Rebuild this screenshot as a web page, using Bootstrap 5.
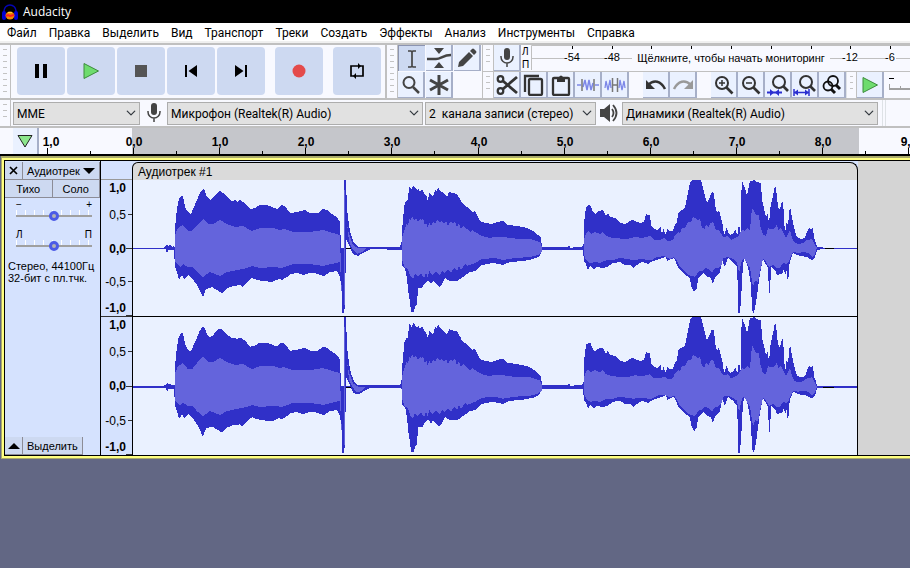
<!DOCTYPE html>
<html lang="ru">
<head>
<meta charset="utf-8">
<meta name="viewport" content="width=device-width, initial-scale=1">
<title>Audacity</title>
<link href="https://cdn.jsdelivr.net/npm/bootstrap@5.3.0/dist/css/bootstrap.min.css" rel="stylesheet">
<style>
body{background:#626784;color:#000;font:12px/16px "Open Sans","Noto Sans",sans-serif;overflow:hidden}
svg{display:block;flex-shrink:0}
svg text{font-family:"Liberation Sans",Arial,sans-serif}
button{padding:0;border:0;color:#000}
.titlebar{background:#000;color:#fff;height:23px;padding-left:2px;gap:5px}
.menubar{height:20px;background:#fff;border-bottom:2px solid #f0f0f0;padding-left:7px;gap:12px;font-family:Roboto,"Open Sans",sans-serif}
.menubar a{color:#000;text-decoration:none;white-space:nowrap;line-height:20px}
.dock{background:#f8f9ff;border-top:2px solid #c0c0c0}
.grip{flex:none;width:11px;border-right:1px solid #c0c0c0;padding:4px 3px;background:repeating-linear-gradient(#c3c3c3 0 1px,transparent 1px 6px) content-box}
.transport{gap:2px;padding:2px 4px 3px 6px;border-right:2px solid #c0c0c0}
.tbtn{width:48px;height:48px;border-radius:4px;background:#cdd9f1;display:grid;place-items:center}
.gap-left{margin-left:8px}
.tool{width:27px;height:26px;background:#eaf1ff;border-right:2px solid #a6afc8;border-bottom:1px solid #a6afc8;display:grid;place-items:center;flex:none}
.tool.pressed{background:#cdd9f1;border:1px solid #8c94b0;border-width:1px 0 0 1px}
.tools-grid{display:grid;grid-template-columns:repeat(3,27px);gap:1px;padding-right:1px;border-right:1px solid #c0c0c0}
.toolrow{height:26px}
.toolrow + .toolrow{border-top:1px solid #c0c0c0;height:27px}
.space{margin-left:14px}
.lr{font:10px/13px "Liberation Sans",Arial,sans-serif;width:10px;padding-left:1px}
.devices{background:#f8f9ff;border-top:2px solid #c0c0c0;border-bottom:2px solid #c0c0c0;height:30px}
.form-select.device{height:23px;border:1px solid #adadad;border-radius:0;background-color:#e1e1e1;background-size:10px;background-position:right 3px center;padding:1px 16px 0 3px;font:12px/20px Roboto,"Open Sans",sans-serif;color:#000;flex:none}
.w-host{width:127px}.w-dev{width:256px}.w-chan{width:171px}
.timeline{height:28px;background:#f8f9ff;border-bottom:2px solid #000;overflow:hidden}
.pin{width:26px;height:26px;background:#eaf1ff;border-right:2px solid #a6afc8;margin-left:13px;display:grid;place-items:center;flex:none}
.track-frame{margin-left:1px;border:solid #a9a96c;border-width:2px 0 1px 1px;font-family:"Liberation Sans",Arial,sans-serif}
.track-inner{border:solid #ffff80;border-width:2px 0 2px 2px;background:#000;padding-bottom:1px}
.track-box{border-top:1px solid #000;border-left:1px solid #000;background:#d4d4d4;height:295px;overflow:hidden}
.panel{width:96px;background:#d5e2fe;border-right:1px solid #000;padding-top:1px;flex:none}
.panel button{background:#cdd9f1;border:solid #8c8c96;border-width:0 1px 1px 0;font-size:12px;line-height:18px;height:18px}
.panel .short{font-size:11px}
.pan{padding:0 8px 0 11px;font-size:10px;line-height:10px;margin-top:9px}
.pan-first{margin-top:2px}
.pan input{display:block;appearance:none;width:100%;height:11px;margin:0;background:linear-gradient(#a0a0a0,#a0a0a0) 0 5px/100% 2px no-repeat,repeating-linear-gradient(90deg,#fff 0 1px,transparent 1px 9px) 0 0/100% 6px no-repeat}
.pan input::-webkit-slider-thumb{appearance:none;width:10px;height:10px;border:3px solid #4c5ae6;border-radius:50%;background:#b4b4b4}
.info{font-size:11px;line-height:12px;padding:1px 3px;white-space:nowrap}
.scale{width:31px;background:#d5e2fe;flex:none}
.scale-head{height:19px;border-bottom:1px solid #999}
.clip{flex:none;background:#d5e2fe}
.clip-name{height:18px;background:#dadada;border:1px solid #000;border-bottom:0;border-radius:6px 8px 0 0;font-size:12px;line-height:18px;padding-left:5px;margin-top:1px;width:726px}
.lane{background:#eaf1ff;border:solid #000;border-width:0 1px;width:726px}
.lane svg + svg{border-top:1px solid #000}
</style>
<script src="https://cdn.jsdelivr.net/npm/bootstrap@5.3.0/dist/js/bootstrap.bundle.min.js"></script>
</head>
<body>
<header class="titlebar d-flex align-items-center">
<svg width="16" height="18" viewBox="0 0 16 18"><path d="M2 11V8a6 6 0 0 1 12 0v3" fill="none" stroke="#0505b4" stroke-width="1.5"/><rect y="8" width="4" height="9" rx="2" fill="#0000d6"/><rect x="12" y="8" width="4" height="9" rx="2" fill="#0000d6"/><ellipse cx="8" cy="12.500" rx="4.500" ry="4" fill="#f08a00"/><path d="M4 13l2-1 2 1 4-1" stroke="#f22" stroke-width="2" fill="none"/><path d="M6 9.500h4" stroke="#ffc83c"/></svg>
<span>Audacity</span>
</header>
<nav class="menubar d-flex" aria-label="Меню"><a href="#">Файл</a><a href="#">Правка</a><a href="#">Выделить</a><a href="#">Вид</a><a href="#">Транспорт</a><a href="#">Треки</a><a href="#">Создать</a><a href="#">Эффекты</a><a href="#">Анализ</a><a href="#">Инструменты</a><a href="#">Справка</a></nav>

<div class="dock d-flex">
<div class="grip"></div>
<div class="transport d-flex">
<button class="tbtn" aria-label="Пауза"><svg width="16" height="16"><path d="M2 1h4v14H2zM10 1h4v14h-4z"/></svg></button>
<button class="tbtn" aria-label="Играть"><svg width="18" height="18"><path d="M2 1.500L16.500 9 2 16.500z" fill="#6edc6e" stroke="#3c8c3c"/></svg></button>
<button class="tbtn" aria-label="Стоп"><svg width="12" height="12"><path d="M0 0h12v12H0z" fill="#555"/></svg></button>
<button class="tbtn" aria-label="К началу"><svg width="14" height="14"><path d="M1 1h2v12H1zM13 1v12L4.500 7z"/></svg></button>
<button class="tbtn" aria-label="К концу"><svg width="14" height="14"><path d="M11 1h2v12h-2zM1 1v12l8.500-6z"/></svg></button>
<button class="tbtn gap-left" aria-label="Запись"><svg width="14" height="14"><circle cx="7" cy="7" r="6.500" fill="#e44b4b"/></svg></button>
<button class="tbtn gap-left" aria-label="Цикл"><svg width="16" height="16" fill="none" stroke="#000" stroke-width="1.700"><path d="M5 13H2V3h8M11 3h3v10H6"/><path d="M9 0v6l3-3zM7 10v6l-3-3z" fill="#000" stroke="none"/></svg></button>
</div>
<div class="grip"></div>
<div class="tools-grid">
<button class="tool pressed" aria-label="Выделение"><svg width="14" height="20" fill="none" stroke="#444" stroke-width="1.700"><path d="M3 2h3l1 1 1-1h3M3 18h3l1-1 1 1h3M7 3v14"/></svg></button>
<button class="tool" aria-label="Огибающая"><svg width="24" height="22" fill="#444"><path d="M7 1h10l-5 6zM7 21h10l-5-6z"/><path d="M0 12h9c5 0 7-4 15-4" fill="none" stroke="#444" stroke-width="2.500"/></svg></button>
<button class="tool" aria-label="Рисование"><svg width="20" height="20" fill="#444"><path d="M1 19l1-5L12 4l4 4L6 18zM13 3l2-2q1-1 2 0l2 2q1 1 0 2l-2 2z"/></svg></button>
<button class="tool" aria-label="Масштаб"><svg width="20" height="20" fill="none" stroke="#444"><circle cx="8" cy="7.500" r="5.500" stroke-width="2"/><path d="M12 12l6 6" stroke-width="2.500"/></svg></button>
<button class="tool" aria-label="Мультиинструмент"><svg width="22" height="22" stroke="#444" stroke-width="3"><path d="M11 1v20M2 6l18 10M20 6L2 16"/></svg></button>
</div>
<div class="flex-grow-1 overflow-hidden">
<div class="toolrow d-flex">
<div class="grip"></div>
<button class="tool" aria-label="Уровень записи"><svg width="16" height="22" fill="none" stroke="#444" stroke-width="1.500"><rect x="5" y="1" width="6" height="12" rx="3" fill="#444" stroke="none"/><path d="M2 9v1a6 6 0 0 0 12 0V9M8 16v4"/></svg></button>
<div class="lr">Л<br>П</div>
<svg class="flex-grow-1" height="26" width="379" style="min-width:0"><path d="M.5 25V.5H800M0 13.500h800" stroke="#c0c0c0" fill="none"/><path d="M41.500 1v3M81.500 1v3M120.500 1v3M160.500 1v3M200.500 1v3M240.500 1v3M280.500 1v3M319.500 1v3M359.500 1v3" stroke="#000"/><g fill="#f8f9ff"><path d="M36 8h12v10H36zM76 8h12v10H76zM101 5h198v16H101zM314 8h12v10h-12zM357 8h8v10h-8z"/></g><g font-size="11" text-anchor="middle"><text x="41" y="16">-54</text><text x="81" y="16">-48</text><text x="200" y="17">Щёлкните, чтобы начать мониторинг</text><text x="319" y="16">-12</text><text x="359" y="16">-6</text></g></svg>
</div>
<div class="toolrow d-flex">
<div class="grip"></div>
<button class="tool" aria-label="Вырезать"><svg width="22" height="22" fill="none" stroke="#333" stroke-width="2.200"><circle cx="4.500" cy="5" r="2.800"/><circle cx="4.500" cy="17" r="2.800"/><path d="M7 7l14 12M7 15L21 3" stroke-width="2.800"/></svg></button>
<button class="tool" aria-label="Копировать"><svg width="22" height="22" fill="none" stroke="#333" stroke-width="2.300"><rect x="6" y="5" width="13" height="16" rx="1.500"/><path d="M2 18V2h14"/></svg></button>
<button class="tool" aria-label="Вставить"><svg width="20" height="22" fill="none" stroke="#333" stroke-width="2.300"><rect x="2" y="4" width="16" height="17" rx="1"/><path d="M6 3h2q2-3 4 0h2v5H6z" fill="#333" stroke="none"/></svg></button>
<button class="tool" aria-label="Обрезать"><svg width="22" height="20" fill="none"><path d="M0 10h4M18 10h4" stroke="#7d88e8" stroke-width="1.500"/><path d="M6 12l2-7 2 10 2-10 2 10 2-7" stroke="#7d88e8" stroke-width="1.500"/><path d="M5 4v12M17 4v12" stroke="#777" stroke-width="1.500"/></svg></button>
<button class="tool" aria-label="Заглушить"><svg width="22" height="20" fill="none"><path d="M1 13l1-7 2 9 2-10 1 8M15 13l1-8 2 10 2-9 1 7" stroke="#7d88e8" stroke-width="1.300"/><path d="M8.500 3v14M13.500 3v14M8 10h6" stroke="#777" stroke-width="1.500"/></svg></button>
<button class="tool space" aria-label="Отменить"><svg width="22" height="18" fill="none" stroke="#333" stroke-width="2.500"><path d="M3 9c6-6 13-4 17 4"/><path d="M1 4v9h9z" fill="#333" stroke="none"/></svg></button>
<button class="tool" aria-label="Повторить"><svg width="22" height="18" fill="none" stroke="#999" stroke-width="2.500"><path d="M19 9C13 3 6 5 2 13"/><path d="M21 4v9h-9z" fill="#999" stroke="none"/></svg></button>
<button class="tool space" aria-label="Приблизить"><svg width="20" height="20" fill="none" stroke="#333" stroke-width="2"><circle cx="8" cy="8" r="6"/><path d="M12.500 12.500l6 6" stroke-width="2.700"/><path d="M5 8h6M8 5v6" stroke-width="1.500"/></svg></button>
<button class="tool" aria-label="Отдалить"><svg width="20" height="20" fill="none" stroke="#333" stroke-width="2"><circle cx="8" cy="8" r="6"/><path d="M12.500 12.500l6 6" stroke-width="2.700"/><path d="M5 8h6" stroke-width="1.500"/></svg></button>
<button class="tool" aria-label="Уместить выделение"><svg width="23" height="22" fill="none" stroke="#333" stroke-width="2"><circle cx="13" cy="8" r="6"/><path d="M17 12l5 5" stroke-width="2.700"/><path d="M1 18.500h15" stroke="#2b2fd0"/><path d="M8 18.500l-4-3.500v7zM9 18.500l4-3.500v7z" fill="#2b2fd0" stroke="none"/></svg></button>
<button class="tool" aria-label="Уместить проект"><svg width="23" height="22" fill="none" stroke="#333" stroke-width="2"><circle cx="13" cy="8" r="6"/><path d="M17 12l5 5" stroke-width="2.700"/><path d="M1 15v7M16 15v7M1 18.500h15" stroke="#2b2fd0" stroke-width="1.500"/><path d="M1 18.500l4-3v6zM16 18.500l-4-3v6z" fill="#2b2fd0" stroke="none"/></svg></button>
<button class="tool" aria-label="Переключить масштаб"><svg width="22" height="22" fill="none" stroke="#111" stroke-width="1.800"><circle cx="12" cy="7" r="5"/><circle cx="7" cy="12" r="4.500"/><path d="M15 11l4 4M10 15l4 4" stroke-width="3"/></svg></button>
<div class="grip border-start"></div>
<button class="tool" aria-label="Воспроизвести"><svg width="18" height="18"><path d="M2 1.500L16.500 9 2 16.500z" fill="#6edc6e" stroke="#3c8c3c"/></svg></button>
<svg class="flex-grow-1" width="20" height="26" style="min-width:0"><path d="M5 6.500h5" stroke="#000"/><path d="M5 17h300" stroke="#a0a0a0" stroke-width="2"/><path d="M5.500 12v5M16.500 14v3" stroke="#a0a0a0"/></svg>
</div>
</div>
</div>

<div class="devices d-flex align-items-center">
<div class="grip align-self-stretch"></div>
<select class="form-select device w-host" style="margin-left:2px" aria-label="Аудиохост"><option>MME</option></select>
<svg class="mx-1" width="19" height="22" fill="none" stroke="#444" stroke-width="1.500"><rect x="7" y="1" width="6" height="12" rx="3" fill="#444" stroke="none"/><path d="M4 9v1a6 6 0 0 0 12 0V9M10 16v4"/></svg>
<select class="form-select device w-dev" aria-label="Устройство записи"><option>Микрофон (Realtek(R) Audio)</option></select>
<select class="form-select device w-chan" style="margin-left:2px" aria-label="Каналы записи"><option>2&nbsp; канала записи (стерео)</option></select>
<svg class="mx-1" width="18" height="20" fill="none" stroke="#444" stroke-width="1.800"><path d="M0 6h4l6-5v18l-6-5H0z" fill="#444" stroke="none"/><path d="M12 6q3 4 0 8M13 2q7 8 0 16"/></svg>
<select class="form-select device w-dev" aria-label="Устройство воспроизведения"><option>Динамики (Realtek(R) Audio)</option></select>
<div class="grip-end border-start border-end align-self-stretch ms-1" style="width:4px"></div>
</div>

<div class="timeline d-flex">
<button class="pin" aria-label="Закрепить головку"><svg width="18" height="16"><path d="M2 2.500h14L9 14z" fill="#8ce68c" stroke="#222"/></svg></button>
<svg class="flex-grow-1" height="26" width="871" style="min-width:0"><path d="M93 0h727v26H93z" fill="#c5c6cb"/><path stroke="#000" d="M8.500 20v6M94.500 20v6M180.500 20v6M266.500 20v6M352.500 20v6M439.500 20v6M525.500 20v6M611.500 20v6M697.500 20v6M783.500 20v6M869.500 20v6M51.500 23v3M137.500 23v3M223.500 23v3M309.500 23v3M395.500 23v3M482.500 23v3M568.500 23v3M654.500 23v3M740.500 23v3M826.500 23v3"/><g font-size="12" font-weight="bold" text-anchor="middle"><text x="12" y="18">1,0</text><text x="95" y="18">0,0</text><text x="181" y="18">1,0</text><text x="267" y="18">2,0</text><text x="353" y="18">3,0</text><text x="440" y="18">4,0</text><text x="526" y="18">5,0</text><text x="612" y="18">6,0</text><text x="698" y="18">7,0</text><text x="784" y="18">8,0</text><text x="870" y="18">9,0</text></g></svg>
</div>

<main class="track-frame"><div class="track-inner"><div class="track-box d-flex">
<section class="panel d-flex flex-column">
<div class="d-flex"><button style="width:18px" aria-label="Закрыть"><svg class="mx-auto" width="9" height="9"><path d="M1 1l7 7M8 1L1 8" stroke="#000" stroke-width="1.700"/></svg></button><button class="short flex-grow-1 d-flex align-items-center justify-content-between ps-1 pe-1 text-nowrap">Аудиотрек<svg width="12" height="6"><path d="M0 0h12L6 6z"/></svg></button></div>
<div class="d-flex"><button class="w-50 short">Тихо</button><button class="w-50 short">Соло</button></div>
<div class="pan pan-first"><div class="d-flex justify-content-between"><span>−</span><span>+</span></div><input type="range" aria-label="Усиление" value="50"></div>
<div class="pan"><div class="d-flex justify-content-between"><span>Л</span><span>П</span></div><input type="range" aria-label="Панорама" value="50"></div>
<div class="info mt-2">Стерео, 44100Гц<br>32-бит с пл.тчк.</div>
<div class="mt-auto d-flex"><button style="width:18px" aria-label="Свернуть"><svg class="mx-auto" width="12" height="6"><path d="M0 6h12L6 0z"/></svg></button><button class="short px-1">Выделить</button></div>
</section>
<div class="scale">
<div class="scale-head"></div>
<svg width="31" height="276"><g font-size="12" text-anchor="end"><g font-weight="bold"><text x="25" y="12">1,0</text><text x="25" y="73">0,0</text><text x="25" y="132">-1,0</text><text x="25" y="149">1,0</text><text x="25" y="210">0,0</text><text x="25" y="271">-1,0</text></g><g><text x="25" y="39">0,5</text><text x="25" y="106">-0,5</text><text x="25" y="176">0,5</text><text x="25" y="245">-0,5</text></g></g><path d="M27 34.500h4M25 68.500h6M27 101.500h4M25 135.500h6M27 171.500h4M25 206.500h6M27 240.500h4M25 274.500h6M0 136.500h31" stroke="#333"/></svg>
</div>
<div class="clip">
<div class="clip-name">Аудиотрек #1</div>
<div class="lane">
<svg width="724" height="136" viewBox="133 180 724 136" shape-rendering="crispEdges"><g id="wave">
<path d="M133 248.500H857" stroke="#3030c8" stroke-width="1.500"/>
<path d="M374 248.500h4M385 248.500h3M819 248.500h15M346 248.500h5" stroke="#000"/>
<path fill="#3030c8" d="M163 248l2-2 1 1 1-3 1 2 2-1 2 2 1-1 2 1
V230L176 217 178 203 179 199 182 195 183 197 184 200 185 207 188 212 191 214 193 209 197 200 200 193 203 189 205 191 207 197 210 200 213 198 217 193 220 191 223 193 227 197 232 201 235 200 237 202 240 200 245 203 250 209 255 208 260 205 267 205 272 207 277 209 281 205 284 206 287 209 290 213 297 212 305 210 310 213 318 213 323 209 327 210 332 214 337 217 340 222 341 248 344 248 344 180 346 180 347 209 349 225 351 235 354 243 358 247 372 247 400 247
402 240 402 227 403 223 404 206 406 201 408 200 409 187 410 186 411 189 412 190 413 185 415 188 417 190 419 189 420 192 422 189 424 193 427 197 428 202 429 193 431 195 433 197 435 190 437 191 438 187 440 191 442 192 447 197 449 192 452 193 457 194 460 199 462 203 467 207 472 212 475 211 478 217 480 221 485 223 492 224 497 222 503 221 508 225 517 226 527 228 533 231 538 235 541 238 542 247
568 247 569 245 571 249 574 247 582 247
584 243 584 223 586 207 589 205 591 206 592 210 595 214 598 211 603 210 606 216 608 213 610 217 615 218 620 223 625 224 632 220 635 221 640 223 644 222 646 214 648 215 650 215 651 225 653 228 657 230 661 227 662 236 663 228 666 235 667 229 670 231 673 231 675 224 677 223 678 213 680 211 682 210 685 208 687 198 690 183 692 180 701 180 702 184 704 192 707 203 709 199 711 194 712 192 714 193 715 205 717 213 719 210 721 218 723 226 724 235 727 227 728 232 730 235 734 233 735 229 737 234 738 233 739 222 740 232 741 232 741 200 742 180 743 184 745 188 747 196 750 181 755 180 756 182 761 183 762 200 766 217 768 213 769 227 770 210 772 200 774 191 775 185 776 188 778 207 780 210 781 204 783 201 784 217 785 235 786 226 787 220 788 227 789 214 790 206 792 218 795 231 797 237 801 239 805 238 807 232 809 228 811 229 813 227 814 239 815 240 817 247
828 248 817 250 815 257 812 260 807 257 800 256 793 253 790 261 789 267 788 287 787 270 785 275 784 268 783 273 777 275 775 270 771 267 770 293 769 293 768 268 763 259 762 264 760 273 758 288 756 303 754 312 753 313 752 308 751 285 748 267 745 258 743 263 742 284 740 313 738 313 738 293 737 267 733 262 728 258 725 267 722 260 720 272 715 277 713 284 711 278 708 277 703 273 698 278 697 288 694 292 691 286 690 278 683 273 678 267 674 258 667 261 666 256 663 258 653 261 648 264 642 262 637 265 633 268 630 265 625 265 620 262 613 263 607 267 603 268 597 267 594 269 590 266 588 270 586 264 584 262 583 250
542 250 540 255 538 257 533 259 523 261 510 262 503 265 493 263 482 265 475 271 470 272 463 277 457 281 450 281 445 278 442 284 439 287 436 284 433 281 431 284 428 280 425 283 422 288 418 288 417 305 415 306 414 312 411 312 410 302 408 290 407 278 405 268 402 266 402 250
371 249 363 253 358 256 353 254 350 247 346 239 345 308 344 309 344 313 342 313 342 293 340 277 337 271 330 272 324 276 320 275 315 273 310 273 303 275 297 273 291 274 287 277 282 280 279 279 272 282 263 281 257 280 252 278 247 282 242 287 240 285 233 286 227 288 222 293 217 290 212 287 206 289 203 297 200 291 197 285 192 278 188 275 184 279 182 275 179 280 177 272 175 267 174 250 168 250 167 254 166 249z"/>
<path fill="#6464dc" d="M175 235L178 228 183 225 188 231 192 231 197 225 203 219 208 224 213 224 220 220 227 224 235 227 243 226 252 231 260 228 273 228 280 230 284 229 293 232 310 232 323 230 333 233 340 235 341 270 342 300 340 262 323 266 310 264 293 264 282 268 274 267 260 268 252 266 247 268 237 270 227 272 220 276 210 272 203 277 198 273 192 267 188 267 183 264 180 267 175 262z
M344 190v115h1V190zM347 224l2 10 4 11 5 3h8l-4 4-5 2-5-6-3-7z
M402 238L405 228 407 223 408 227 409 219 411 221 412 216 414 220 416 218 418 222 420 219 422 221 423 218 425 226 426 222 428 228 429 222 431 226 433 222 435 224 437 220 440 222 442 221 444 224 446 221 448 226 450 222 453 223 455 221 457 227 459 223 461 229 463 226 467 229 470 232 472 230 475 232 482 236 490 238 493 237 503 237 510 238 520 239 530 239 540 242 542 247 542 252 538 255 530 257 515 258 503 260 495 258 482 259 475 263 467 266 465 264 461 270 459 266 457 271 454 268 451 273 448 269 445 273 442 271 440 275 436 272 432 275 429 270 428 278 426 273 424 278 421 273 418 277 415 274 413 279 410 276 408 269 405 268 402 260z
M584 239L586 234 588 231 591 234 595 232 600 234 603 232 606 236 613 238 627 239 635 237 642 238 650 236 654 240 660 240 664 238 668 241 673 240 675 235 678 232 680 233 682 228 685 228 688 222 691 222 693 217 695 218 698 220 700 219 702 228 705 229 706 224 709 228 710 223 713 222 716 230 719 230 723 237 728 236 731 240 737 237 739 235 742 230 745 231 747 228 750 230 752 208 754 211 756 215 759 215 760 225 763 235 766 236 768 228 770 229 773 229 775 228 777 224 778 230 781 228 783 232 786 238 790 230 792 238 794 242 798 244 803 243 807 240 812 239 815 245 817 248 815 254 812 257 808 253 803 252 798 253 793 252 788 263 786 264 783 263 780 268 777 268 773 265 769 267 766 262 763 259 761 267 758 282 755 281 753 287 750 268 747 263 744 258 742 260 739 273 737 262 733 259 728 257 723 258 722 264 718 268 715 268 712 273 709 269 705 268 702 271 699 271 695 277 692 276 688 275 685 271 680 267 677 261 674 257 670 259 664 256 657 257 652 260 648 260 642 259 633 260 627 259 620 258 613 260 607 260 600 263 595 262 590 263 586 260 584 255z"/>
</g></svg>
<svg width="724" height="140" viewBox="133 180 724 136" preserveAspectRatio="none" shape-rendering="crispEdges"><use href="#wave"/></svg>
</div>
</div>
</div></div></main>
</body>
</html>
